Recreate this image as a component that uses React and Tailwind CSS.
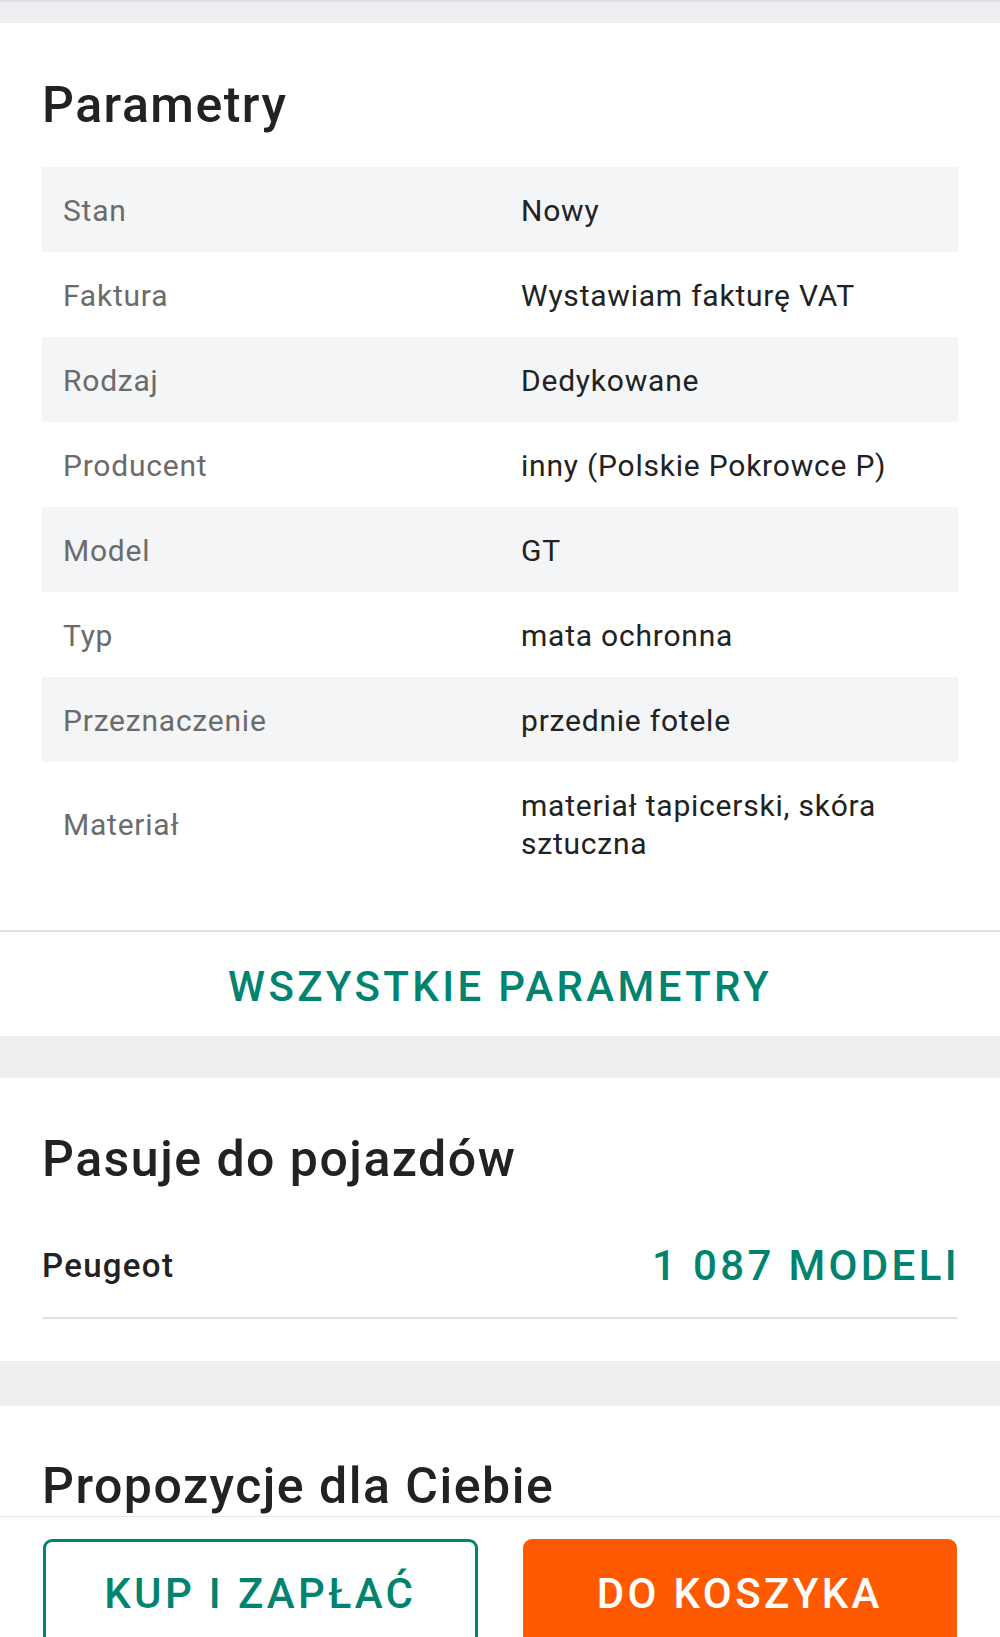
import React from 'react';

const params = [
  { label: 'Stan', value: 'Nowy' },
  { label: 'Faktura', value: 'Wystawiam fakturę VAT' },
  { label: 'Rodzaj', value: 'Dedykowane' },
  { label: 'Producent', value: 'inny (Polskie Pokrowce P)' },
  { label: 'Model', value: 'GT' },
  { label: 'Typ', value: 'mata ochronna' },
  { label: 'Przeznaczenie', value: 'przednie fotele' },
  { label: 'Materiał', value: 'materiał tapicerski, skóra sztuczna' },
];

const App = () => {
  return (
    <div className="w-[1000px] h-[1637px] overflow-hidden bg-white font-['Roboto',_'Liberation_Sans',_sans-serif] flex flex-col">
      {/* top grey strip */}
      <div className="h-[23px] shrink-0 bg-gradient-to-b from-[#d9dbde] via-[#eceef0] to-[#eceef0] [background-size:100%_6px] bg-no-repeat bg-[#eceef0]" />

      {/* Parametry */}
      <section className="shrink-0 bg-white">
        <div className="px-[42px] pt-[52px] pb-[45px]">
          <h2 className="text-[50px] leading-[60px] font-medium tracking-[0.03em] text-[#222222] mb-[32px]">Parametry</h2>
          <div className="flex flex-col">
            {params.map((p, i) => (
              <div
                key={p.label}
                className={`grid grid-cols-2 items-center pt-[25px] pb-[22px] text-[30px] leading-[38px] tracking-[0.026em] ${i % 2 === 0 ? 'bg-[#f4f5f6]' : 'bg-white'}`}
              >
                <div className="pl-[21px] pr-4 text-[#6b6b6b]">{p.label}</div>
                <div className="pl-[21px] pr-4 text-[#222222]">{p.value}</div>
              </div>
            ))}
          </div>
        </div>
        <div className="border-t-2 border-[#e2e2e2] h-[106px] flex items-center justify-center pt-[4px]">
          <span className="text-[42px] font-medium tracking-[0.08em] text-[#00846f]">WSZYSTKIE PARAMETRY</span>
        </div>
      </section>

      <div className="h-[42px] shrink-0 bg-[#eceef0]" />

      {/* Pasuje do pojazdów */}
      <section className="shrink-0 bg-white px-[42px] pt-[51px] pb-[42px]">
        <h2 className="text-[50px] leading-[60px] font-medium tracking-[0.03em] text-[#222222]">Pasuje do pojazdów</h2>
        <div className="flex items-center justify-between mt-[45px] pb-[20px] border-b-2 border-[#e2e2e2]">
          <span className="text-[33px] font-medium tracking-[0.04em] text-[#222222]">Peugeot</span>
          <span className="text-[42px] font-medium tracking-[0.08em] text-[#00846f] -mr-[2px]">1 087 MODELI</span>
        </div>
      </section>

      <div className="h-[45px] shrink-0 bg-[#eceef0]" />

      {/* Propozycje */}
      <section className="shrink-0 bg-white px-[42px] pt-[50px]">
        <h2 className="text-[50px] leading-[60px] font-medium tracking-[0.03em] text-[#222222]">Propozycje dla Ciebie</h2>
      </section>

      {/* bottom action bar */}
      <div className="shrink-0 bg-white border-t border-[#e6e8ea] px-[43px] pt-[22px] grid grid-cols-2 gap-[45px]">
        <button className="h-[108px] rounded-[9px] border-[3px] border-[#00846f] bg-white text-[42px] font-medium tracking-[0.08em] text-[#00846f]">
          KUP I ZAPŁAĆ
        </button>
        <button className="h-[108px] rounded-[9px] bg-[#ff5a00] text-[42px] font-medium tracking-[0.08em] text-white">
          DO KOSZYKA
        </button>
      </div>
    </div>
  );
};

export default App;
